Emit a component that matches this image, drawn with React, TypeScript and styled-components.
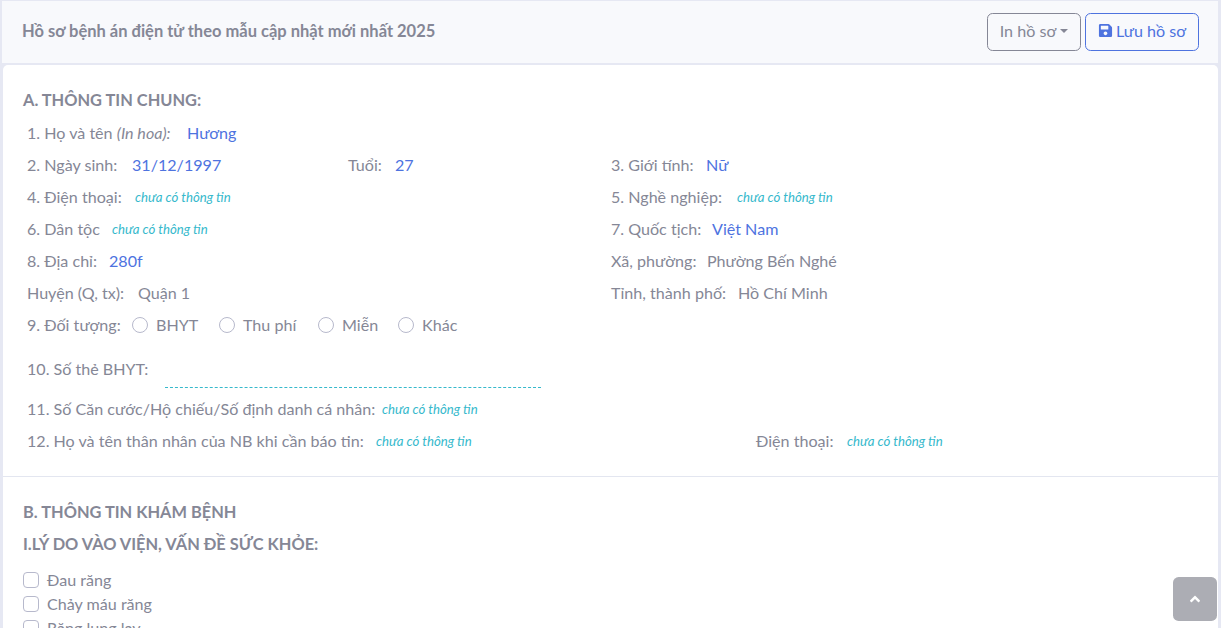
import React from "react";
import styled, { createGlobalStyle } from "styled-components";
import { FaSave, FaAngleUp } from "react-icons/fa";

const Global = createGlobalStyle`
  html, body { margin: 0; padding: 0; height: 628px; overflow: hidden; }
  body { background: #e6e8f3; font-family: "Lato", "Noto Sans", sans-serif; font-size: 16.1px; color: #858796; }
  * { box-sizing: border-box; }
`;

const Page = styled.div`
  height: 628px;
  padding: 1px 3px 0 2px;
  overflow: hidden;
`;
const Header = styled.header`
  height: 62px;
  background: #f8f9fc;
  display: flex;
  align-items: center;
  justify-content: space-between;
  padding: 0 19px 0 20px;
`;
const Title = styled.h1`
  margin: 0 0 2px;
  font-size: 16.5px;
  font-weight: 700;
  color: #858796;
`;
const Actions = styled.div`
  display: flex;
  gap: 4px;
`;
const OutlineButton = styled.button<{ $primary?: boolean; $width: number }>`
  width: ${(p) => p.$width}px;
  height: 38px;
  padding: 0 0 3px;
  display: inline-flex;
  align-items: center;
  justify-content: center;
  gap: 3px;
  font: inherit;
  background: transparent;
  border-radius: 5.6px;
  border: 1px solid ${(p) => (p.$primary ? "#4e73df" : "#858796")};
  color: ${(p) => (p.$primary ? "#4e73df" : "#858796")};
`;
const Caret = styled.span`
  width: 0;
  height: 0;
  margin-left: 1px;
  border-top: 4px solid currentColor;
  border-left: 4px solid transparent;
  border-right: 4px solid transparent;
`;
const Card = styled.main`
  margin: 2px 0 0 1px;
  height: 600px;
  background: #fff;
  border-radius: 5px 5px 0 0;
  overflow: hidden;
`;
const Section = styled.section<{ $bordered?: boolean }>`
  padding: 20px 20px 0 20px;
  ${(p) => (p.$bordered ? "height: 412px; border-bottom: 1px solid #e3e6f0;" : "")}
`;
const SectionTitle = styled.h2`
  margin: 0;
  height: 32px;
  line-height: 30px;
  font-size: 16.4px;
  font-weight: 700;
  color: #858796;
`;
const Row = styled.div<{ $height?: number; $first?: number }>`
  display: grid;
  grid-template-columns: ${(p) => p.$first ?? 584}px 1fr;
  height: ${(p) => p.$height ?? 32}px;
  padding: 0 0 2px 4px;
  align-items: center;
`;
const Cell = styled.div`
  display: flex;
  align-items: center;
  min-width: 0;
`;
const Label = styled.span<{ $width: number }>`
  width: ${(p) => p.$width}px;
  flex: none;
  white-space: nowrap;
`;
const RaisedLabel = styled(Label)`
  margin-top: 4px;
`;
const Value = styled.span<{ $width?: number }>`
  color: #4e73df;
  white-space: nowrap;
  ${(p) => (p.$width ? `width: ${p.$width}px; flex: none;` : "")}
`;
const Plain = styled.span`
  white-space: nowrap;
`;
const Empty = styled.i`
  margin-top: 2px;
  color: #36b9cc;
  font-size: 13.2px;
  white-space: nowrap;
`;
const Radio = styled.span`
  width: 16px;
  height: 16px;
  margin: 2px 8px 0 0;
  flex: none;
  border-radius: 50%;
  border: 1px solid #b7b9cc;
`;
const RadioItem = styled.label<{ $width: number }>`
  display: flex;
  align-items: center;
  width: ${(p) => p.$width}px;
  flex: none;
`;
const DashField = styled.div`
  width: 376px;
  height: 44px;
  border-bottom: 1px dashed #36b9cc;
`;
const CheckList = styled.div`
  margin-top: 7px;
`;
const CheckRow = styled.label`
  display: flex;
  align-items: center;
  height: 24px;
  gap: 8px;
`;
const CheckText = styled.span`
  padding-bottom: 2px;
`;
const Check = styled.span`
  width: 16px;
  height: 16px;
  flex: none;
  border: 1px solid #b7b9cc;
  border-radius: 4px;
`;
const ScrollTop = styled.a`
  position: fixed;
  right: 4px;
  bottom: 7px;
  width: 44px;
  height: 44px;
  display: flex;
  align-items: center;
  justify-content: center;
  border-radius: 5.6px;
  background: rgba(90, 92, 105, 0.5);
  color: #fff;
  font-size: 16px;
`;

const Missing = () => <Empty>chưa có thông tin</Empty>;

export default function App() {
  return (
    <Page>
      <Global />
      <Header>
        <Title>Hồ sơ bệnh án điện tử theo mẫu cập nhật mới nhất 2025</Title>
        <Actions>
          <OutlineButton $width={94}>In hồ sơ <Caret /></OutlineButton>
          <OutlineButton $primary $width={114}><FaSave size={15} /> Lưu hồ sơ</OutlineButton>
        </Actions>
      </Header>
      <Card>
        <Section $bordered>
          <SectionTitle>A. THÔNG TIN CHUNG:</SectionTitle>
          <Row>
            <Cell><Label $width={160}>1. Họ và tên <i>(In hoa):</i></Label><Value>Hương</Value></Cell>
          </Row>
          <Row>
            <Cell>
              <Label $width={105}>2. Ngày sinh:</Label><Value $width={216}>31/12/1997</Value>
              <Label $width={47}>Tuổi:</Label><Value>27</Value>
            </Cell>
            <Cell><Label $width={95}>3. Giới tính:</Label><Value>Nữ</Value></Cell>
          </Row>
          <Row>
            <Cell><Label $width={108}>4. Điện thoại:</Label><Missing /></Cell>
            <Cell><Label $width={126}>5. Nghề nghiệp:</Label><Missing /></Cell>
          </Row>
          <Row>
            <Cell><Label $width={85}>6. Dân tộc</Label><Missing /></Cell>
            <Cell><Label $width={101}>7. Quốc tịch:</Label><Value>Việt Nam</Value></Cell>
          </Row>
          <Row>
            <Cell><Label $width={82}>8. Địa chỉ:</Label><Value>280f</Value></Cell>
            <Cell><Label $width={96}>Xã, phường:</Label><Plain>Phường Bến Nghé</Plain></Cell>
          </Row>
          <Row>
            <Cell><Label $width={111}>Huyện (Q, tx):</Label><Plain>Quận 1</Plain></Cell>
            <Cell><Label $width={127}>Tỉnh, thành phố:</Label><Plain>Hồ Chí Minh</Plain></Cell>
          </Row>
          <Row>
            <Cell>
              <Label $width={105}>9. Đối tượng:</Label>
              <RadioItem $width={87}><Radio />BHYT</RadioItem>
              <RadioItem $width={99}><Radio />Thu phí</RadioItem>
              <RadioItem $width={80}><Radio />Miễn</RadioItem>
              <RadioItem $width={70}><Radio />Khác</RadioItem>
            </Cell>
          </Row>
          <Row $height={52}>
            <Cell>
              <RaisedLabel $width={138}>10. Số thẻ BHYT:</RaisedLabel>
              <DashField />
            </Cell>
          </Row>
          <Row>
            <Cell><Label $width={355}>11. Số Căn cước/Hộ chiếu/Số định danh cá nhân:</Label><Missing /></Cell>
          </Row>
          <Row $first={729}>
            <Cell>
              <Label $width={349}>12. Họ và tên thân nhân của NB khi cần báo tin:</Label><Missing />
            </Cell>
            <Cell><Label $width={91}>Điện thoại:</Label><Missing /></Cell>
          </Row>
        </Section>
        <Section>
          <SectionTitle>B. THÔNG TIN KHÁM BỆNH</SectionTitle>
          <SectionTitle>I.LÝ DO VÀO VIỆN, VẤN ĐỀ SỨC KHỎE:</SectionTitle>
          <CheckList>
            <CheckRow><Check /><CheckText>Đau răng</CheckText></CheckRow>
            <CheckRow><Check /><CheckText>Chảy máu răng</CheckText></CheckRow>
            <CheckRow><Check /><CheckText>Răng lung lay</CheckText></CheckRow>
          </CheckList>
        </Section>
      </Card>
      <ScrollTop><FaAngleUp /></ScrollTop>
    </Page>
  );
}
